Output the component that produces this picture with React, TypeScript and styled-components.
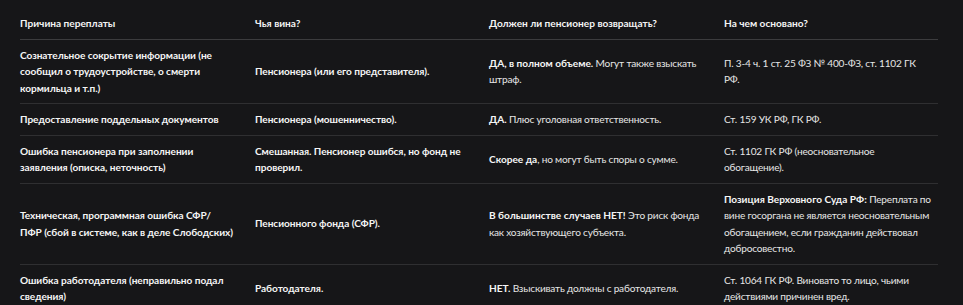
import React from 'react'
import styled, { createGlobalStyle } from 'styled-components'

//Global
const GlobalStyle = createGlobalStyle`
  body {
    margin: 0;
    background-color: #161618;
    font-family: 'Lato', 'Noto Sans', sans-serif;
  }
`

//Styled Components
const Page = styled.div`
  padding: 8px 25px 0 20px;
`

const Table = styled.table`
  width: 918px;
  border-collapse: collapse;
  table-layout: fixed;
  font-size: 10.1px;
  line-height: 16.5px;
  color: #e6e6e6;
`

const Col = styled.col<IColProps>`
  width: ${(props) => props.w}px;
`

const HeadCell = styled.th`
  text-align: left;
  font-weight: 700;
  color: #f4f4f4;
  padding: 7px 18px 7px 0;
  border-bottom: 1px solid #3c3c3e;
`

const Row = styled.tr`
  border-bottom: 1px solid #2f2f31;

  &:last-child {
    border-bottom: none;
  }
`

const Cell = styled.td<ICellProps>`
  vertical-align: middle;
  padding: 7px 18px 7px 0;
  font-weight: ${(props) => (props.strong ? 700 : 400)};
  color: ${(props) => (props.strong ? '#f5f5f5' : '#e6e6e6')};
  letter-spacing: ${(props) => (props.strong ? '-0.05px' : '-0.2px')};

  &:last-child {
    padding-right: 0;
  }
`

const B = styled.b`
  font-weight: 700;
  color: #f5f5f5;
  letter-spacing: 0;
`

//Interfaces
interface IColProps {
  w: number
}

interface ICellProps {
  strong?: boolean
}

//Data
const heads = [
  'Причина переплаты',
  'Чья вина?',
  'Должен ли пенсионер возвращать?',
  'На чем основано?',
]

const rows: [React.ReactNode, React.ReactNode, React.ReactNode, React.ReactNode][] = [
  [
    'Сознательное сокрытие информации (не сообщил о трудоустройстве, о смерти кормильца и т.п.)',
    'Пенсионера (или его представителя).',
    <><B>ДА, в полном объеме.</B> Могут также взыскать штраф.</>,
    <>П. 3-4 ч. 1 ст. 25 ФЗ № 400-ФЗ, ст. 1102 ГК<br />РФ.</>,
  ],
  [
    'Предоставление поддельных документов',
    'Пенсионера (мошенничество).',
    <><B>ДА.</B> Плюс уголовная ответственность.</>,
    <>Ст. 159 УК РФ, ГК РФ.</>,
  ],
  [
    'Ошибка пенсионера при заполнении заявления (описка, неточность)',
    'Смешанная. Пенсионер ошибся, но фонд не проверил.',
    <><B>Скорее да</B>, но могут быть споры о сумме.</>,
    <>Ст. 1102 ГК РФ (неосновательное<br />обогащение).</>,
  ],
  [
    <>Техническая, программная ошибка СФР/<br />ПФР (сбой в системе, как в деле Слободских)</>,
    'Пенсионного фонда (СФР).',
    <><B>В большинстве случаев НЕТ!</B> Это риск фонда как хозяйствующего субъекта.</>,
    <><B>Позиция Верховного Суда РФ:</B> Переплата по вине госоргана не является неосновательным обогащением, если гражданин действовал добросовестно.</>,
  ],
  [
    'Ошибка работодателя (неправильно подал сведения)',
    'Работодателя.',
    <><B>НЕТ.</B> Взыскивать должны с работодателя.</>,
    <>Ст. 1064 ГК РФ. Виновато то лицо, чьими действиями причинен вред.</>,
  ],
]

//React Component
const App: React.FC = () => {
  return (
    <>
      <GlobalStyle />
      <Page>
        <Table>
          <colgroup>
            <Col w={235} />
            <Col w={234} />
            <Col w={235} />
            <Col w={214} />
          </colgroup>
          <thead>
            <tr>
              {heads.map((h) => (
                <HeadCell key={h}>{h}</HeadCell>
              ))}
            </tr>
          </thead>
          <tbody>
            {rows.map((r, i) => (
              <Row key={i}>
                {r.map((c, j) => (
                  <Cell key={j} strong={j < 2}>
                    {c}
                  </Cell>
                ))}
              </Row>
            ))}
          </tbody>
        </Table>
      </Page>
    </>
  )
}
export default App
